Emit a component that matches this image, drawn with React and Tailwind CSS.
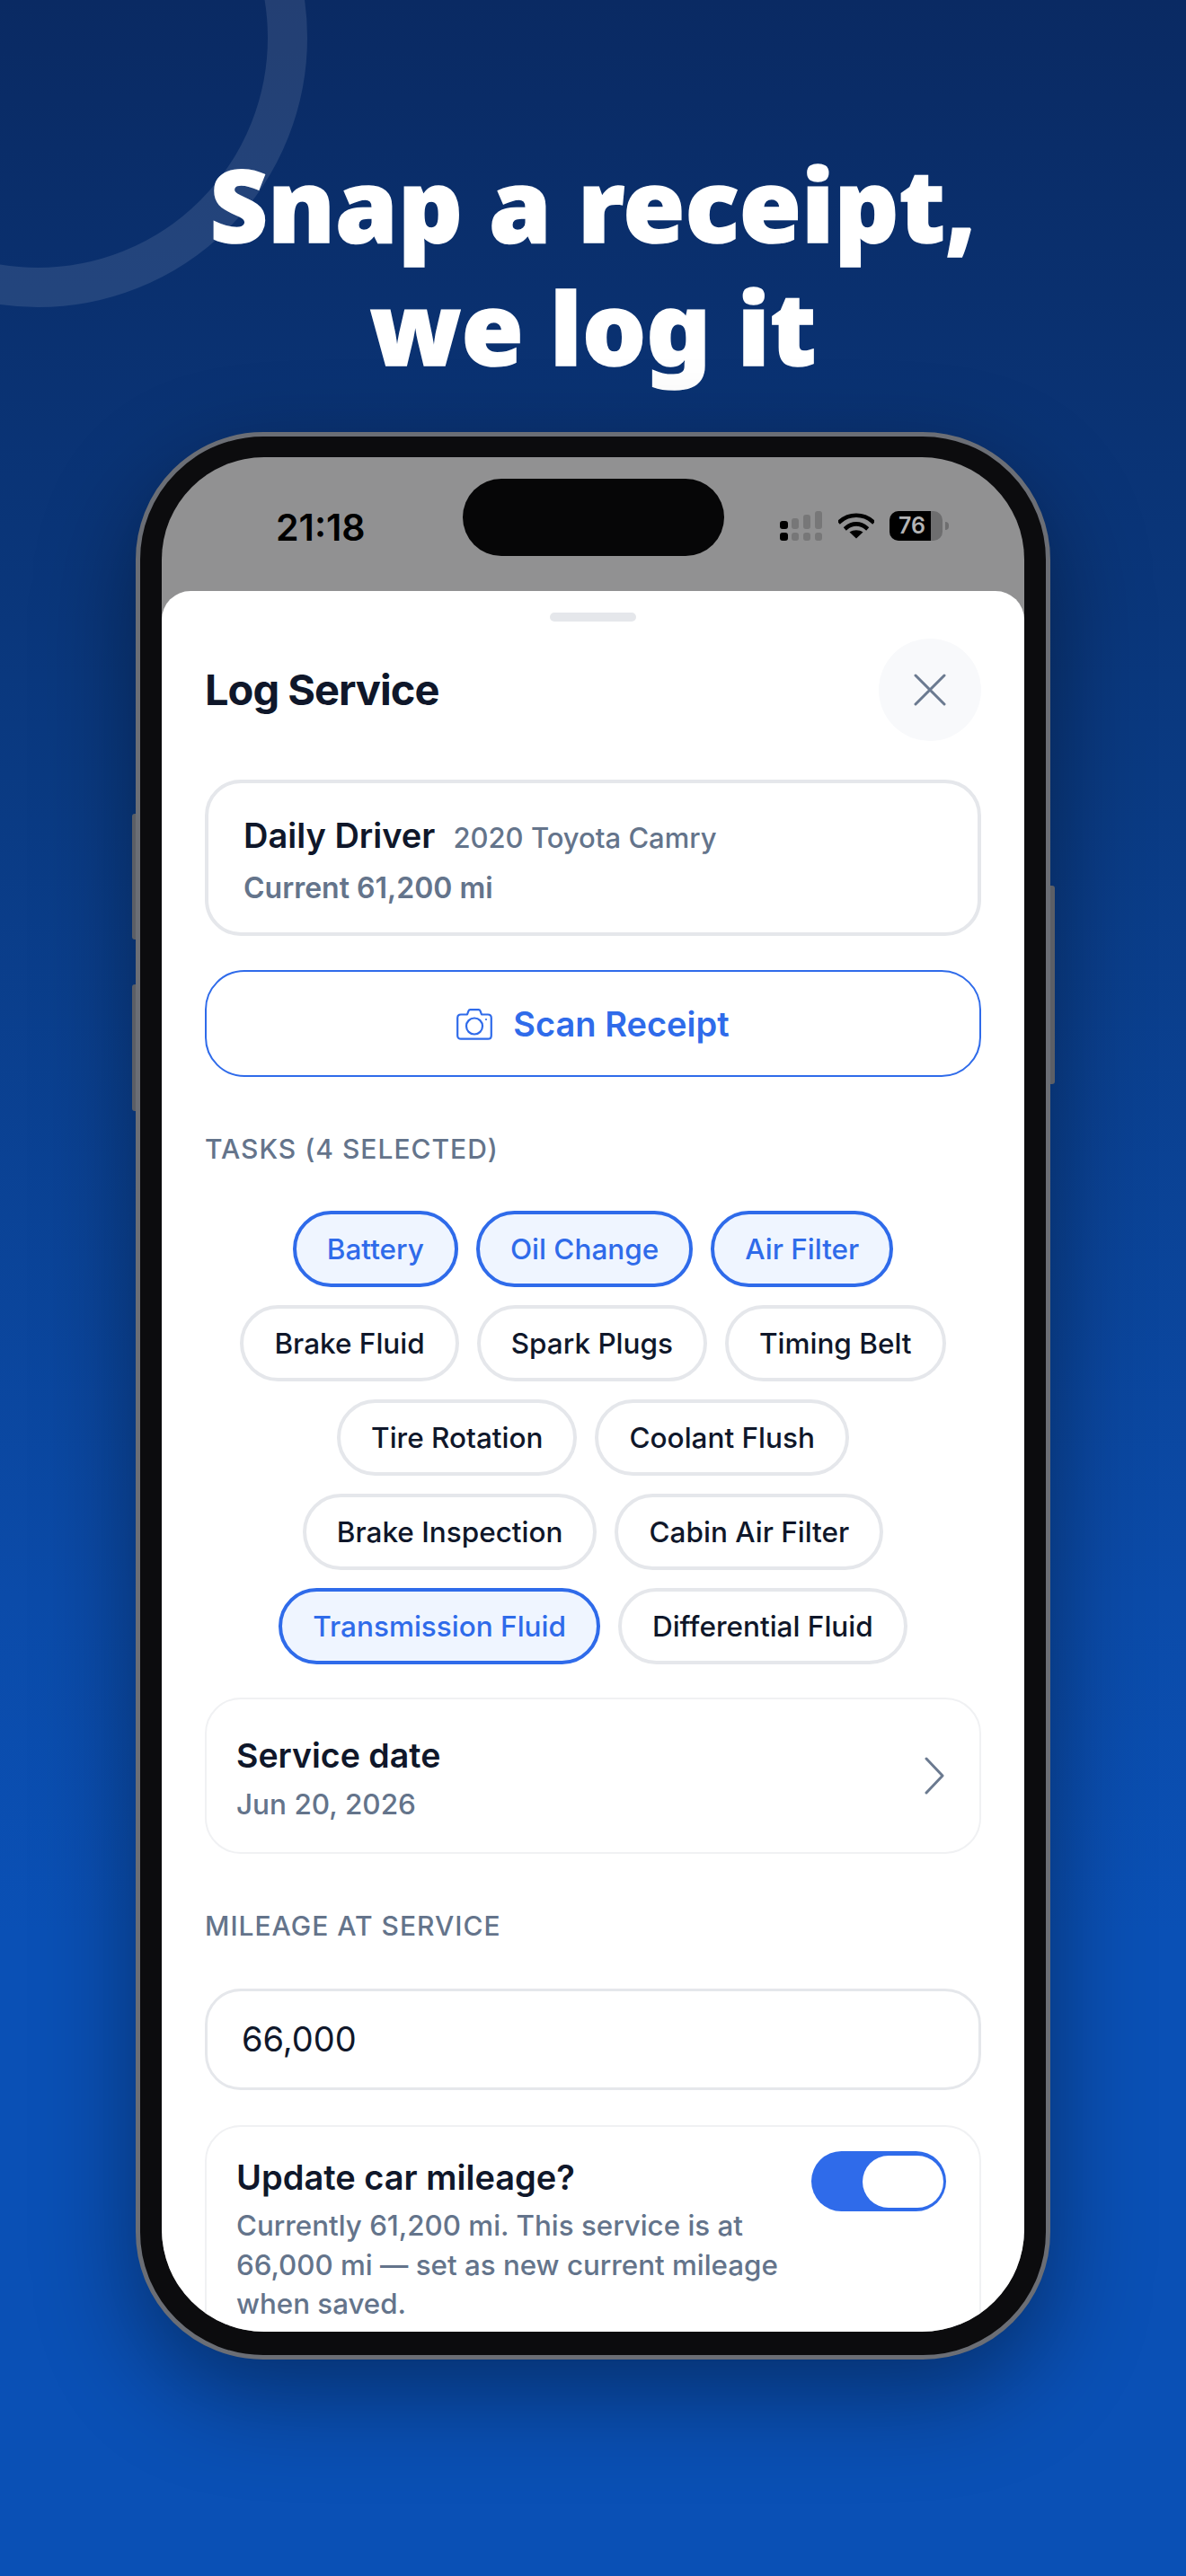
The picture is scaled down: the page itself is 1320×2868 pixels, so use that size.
import React from "react";

const selected = "border-[#2f6bea] bg-[#eff5ff] text-[#2f6bea]";
const normal = "border-[#e5e7eb] bg-white text-[#0f172a]";

const rows = [
  [["Battery", true], ["Oil Change", true], ["Air Filter", true]],
  [["Brake Fluid"], ["Spark Plugs"], ["Timing Belt"]],
  [["Tire Rotation"], ["Coolant Flush"]],
  [["Brake Inspection"], ["Cabin Air Filter"]],
  [["Transmission Fluid", true], ["Differential Fluid"]],
];

const Chip = ({ label, active }) => (
  <div
    className={`flex h-[85px] items-center rounded-full border-[4px] px-[34px] text-[31.5px] font-medium ${
      active ? selected : normal
    }`}
  >
    {label}
  </div>
);

const SignalIcon = () => (
  <svg width="48" height="34" viewBox="0 0 48 34">
    <rect x="0" y="11" width="9" height="9" rx="3" fill="#000" />
    <rect x="0" y="24" width="9" height="9" rx="3" fill="#000" />
    <rect x="13" y="8" width="8" height="12" rx="3" fill="#777778" />
    <rect x="13" y="24" width="8" height="9" rx="3" fill="#777778" />
    <rect x="26" y="4" width="8" height="16" rx="3" fill="#777778" />
    <rect x="26" y="24" width="8" height="9" rx="3" fill="#777778" />
    <rect x="39" y="0" width="8" height="20" rx="3" fill="#777778" />
    <rect x="39" y="24" width="8" height="9" rx="3" fill="#777778" />
  </svg>
);

const WifiIcon = () => (
  <svg width="40" height="30" viewBox="0 0 40 30" fill="none">
    <path d="M2 10.5C12 1.5 28 1.5 38 10.5" stroke="#000" strokeWidth="4.6" strokeLinecap="square" />
    <path d="M9 17.5C15 12 25 12 31 17.5" stroke="#000" strokeWidth="4.6" strokeLinecap="square" />
    <path d="M20 29.5L12.5 22.5C17 19.5 23 19.5 27.5 22.5Z" fill="#000" />
  </svg>
);

const BatteryIcon = () => (
  <div className="flex items-center gap-[3px]">
    <div className="flex h-[33px] w-[59px] overflow-hidden rounded-[10px] bg-[#6e6e6f]">
      <div className="flex w-[46px] items-center justify-center bg-black pl-[4px] text-[25px] font-semibold leading-none text-[#b4b4b5]">
        76
      </div>
    </div>
    <div className="h-[9px] w-[4px] rounded-r-full bg-[#6e6e6f]" />
  </div>
);

const CameraIcon = () => (
  <svg width="40" height="35" viewBox="0 0 40 35" fill="none" stroke="#2f6bea" strokeWidth="2.2" strokeLinejoin="round">
    <path d="M5 6.5H12L13.4 2.6C13.8 1.6 14.4 1.2 15.4 1.2H24.6C25.6 1.2 26.2 1.6 26.6 2.6L28 6.5H35C37.3 6.5 38.8 8 38.8 10.3V29.9C38.8 32.2 37.3 33.7 35 33.7H5C2.7 33.7 1.2 32.2 1.2 29.9V10.3C1.2 8 2.7 6.5 5 6.5Z" />
    <circle cx="20" cy="19.5" r="9" />
    <circle cx="33" cy="12" r="1.1" fill="#2f6bea" stroke="none" />
  </svg>
);

const App = () => {
  return (
    <div className="relative h-[2868px] w-[1320px] overflow-hidden bg-[linear-gradient(180deg,#0a2a63_0%,#0a3a82_30%,#0b4ba9_62%,#0a50b5_75%,#0a50b5_100%)] font-['Inter',sans-serif]">
      {/* ring in the corner */}
      <div className="absolute left-[-258px] top-[-258px] h-[600px] w-[600px] rounded-full border-[44px] border-white/10" />

      <h1 className="relative pt-[158px] text-center font-['Noto_Sans',sans-serif] text-[112px] font-black leading-[137px] text-white [-webkit-text-stroke:1.5px_white]">
        Snap a receipt,
        <br />
        we log it
      </h1>

      {/* phone */}
      <div className="relative mx-auto mt-[49px] h-[2146px] w-[1018px] rounded-[142px] border-[5px] border-[#6b6e75] bg-[#0c0c0e] pb-[26px] pl-[24px] pr-[24px] pt-[23px] shadow-[0_40px_110px_rgba(0,0,0,0.4)]">
        <div className="absolute left-[-9px] top-[420px] h-[140px] w-[4px] rounded-l-[3px] bg-[#5c5f66]" />
        <div className="absolute left-[-9px] top-[610px] h-[141px] w-[4px] rounded-l-[3px] bg-[#5c5f66]" />
        <div className="absolute right-[-10px] top-[500px] h-[221px] w-[5px] rounded-r-[3px] bg-[#5c5f66]" />

        <div className="h-[2087px] w-[960px] overflow-hidden rounded-[114px] bg-[#919192]">
          {/* status bar */}
          <div className="relative h-[149px]">
            <div className="absolute left-[335px] top-[24px] h-[86px] w-[291px] rounded-full bg-[#060607]" />
            <div className="flex items-start pl-[127px] pt-[55px]">
              <span className="w-[100px] text-[41px] font-semibold leading-[46px] text-black">21:18</span>
              <div className="ml-[461px] mt-[5px]">
                <SignalIcon />
              </div>
              <div className="ml-[17px] mt-[6px]">
                <WifiIcon />
              </div>
              <div className="ml-[17px] mt-[5px]">
                <BatteryIcon />
              </div>
            </div>
          </div>

          {/* sheet */}
          <div className="rounded-t-[32px] bg-white px-[48px] pt-[24px]">
            <div className="mx-auto h-[10px] w-[96px] rounded-full bg-[#e5e7eb]" />

            <div className="mt-[19px] flex h-[114px] items-center justify-between">
              <h2 className="text-[47px] font-bold tracking-[-1px] text-[#0f172a]">Log Service</h2>
              <div className="flex h-[114px] w-[114px] items-center justify-center rounded-full bg-[#f8f9fb]">
                <svg width="36" height="36" viewBox="0 0 36 36" fill="none" stroke="#6b7a90" strokeWidth="3" strokeLinecap="round">
                  <path d="M2 2L34 34M34 2L2 34" />
                </svg>
              </div>
            </div>

            <div className="mt-[43px] flex h-[174px] flex-col justify-center rounded-[40px] border-[4px] border-[#e5e7eb] pl-[39px] pt-[5px]">
              <div className="flex items-baseline gap-[20px]">
                <span className="text-[38px] font-semibold text-[#0f172a]">Daily Driver</span>
                <span className="text-[31px] font-medium text-[#64748b]">2020 Toyota Camry</span>
              </div>
              <div className="mt-[6px] text-[32px] font-semibold text-[#64748b]">Current 61,200 mi</div>
            </div>

            <div className="mt-[38px] flex h-[119px] items-center justify-center gap-[23px] rounded-[44px] border-[2px] border-[#2f6bea] pt-[2px]">
              <CameraIcon />
              <span className="text-[38px] font-semibold text-[#2f6bea]">Scan Receipt</span>
            </div>

            <div className="mt-[60px] h-[39px] text-[30px] font-medium leading-[40px] tracking-[1px] text-[#64748b]">TASKS (4 SELECTED)</div>

            <div className="mt-[50px] flex flex-col gap-[20px]">
              {rows.map((row, i) => (
                <div key={i} className="flex justify-center gap-[20px]">
                  {row.map(([label, active]) => (
                    <Chip key={label} label={label} active={active} />
                  ))}
                </div>
              ))}
            </div>

            <div className="mt-[37px] flex h-[174px] items-center justify-between rounded-[40px] border-[2px] border-[#f0f1f3] pl-[33px] pr-[38px]">
              <div className="pt-[6px]">
                <div className="text-[37.5px] font-semibold leading-[46px] text-[#0f172a]">Service date</div>
                <div className="mt-[11px] text-[31.5px] font-medium leading-[40px] text-[#64748b]">Jun 20, 2026</div>
              </div>
              <svg width="24" height="42" viewBox="0 0 24 42" fill="none" stroke="#6b7a90" strokeWidth="3" strokeLinecap="round" strokeLinejoin="round">
                <path d="M3 2L21 21L3 40" />
              </svg>
            </div>

            <div className="mt-[60px] h-[39px] text-[30px] font-medium leading-[40px] tracking-[1px] text-[#64748b]">MILEAGE AT SERVICE</div>

            <div className="mt-[51px] flex h-[113px] items-center rounded-[40px] border-[3px] border-[#e5e7eb] pl-[38px] text-[38px] text-[#0f172a]">
              66,000
            </div>

            <div className="mt-[39px] flex items-start justify-between rounded-[40px] border-[2px] border-[#f0f1f3] pb-[40px] pl-[33px] pr-[37px] pt-[33px]">
              <div className="w-[625px]">
                <div className="text-[38px] font-semibold leading-[46px] text-[#0f172a]">Update car mileage?</div>
                <div className="mt-[10px] text-[31.3px] font-medium leading-[43.6px] text-[#64748b]">
                  Currently 61,200 mi. This service is at
                  <br />
                  66,000 mi — set as new current mileage
                  <br />
                  when saved.
                </div>
              </div>
              <div className="mt-[-6px] flex h-[67px] w-[150px] items-center justify-end rounded-full bg-[#2f6bea] pr-[3px]">
                <div className="h-[58px] w-[90px] rounded-[29px] bg-white" />
              </div>
            </div>
          </div>
        </div>
      </div>
    </div>
  );
};

export default App;
